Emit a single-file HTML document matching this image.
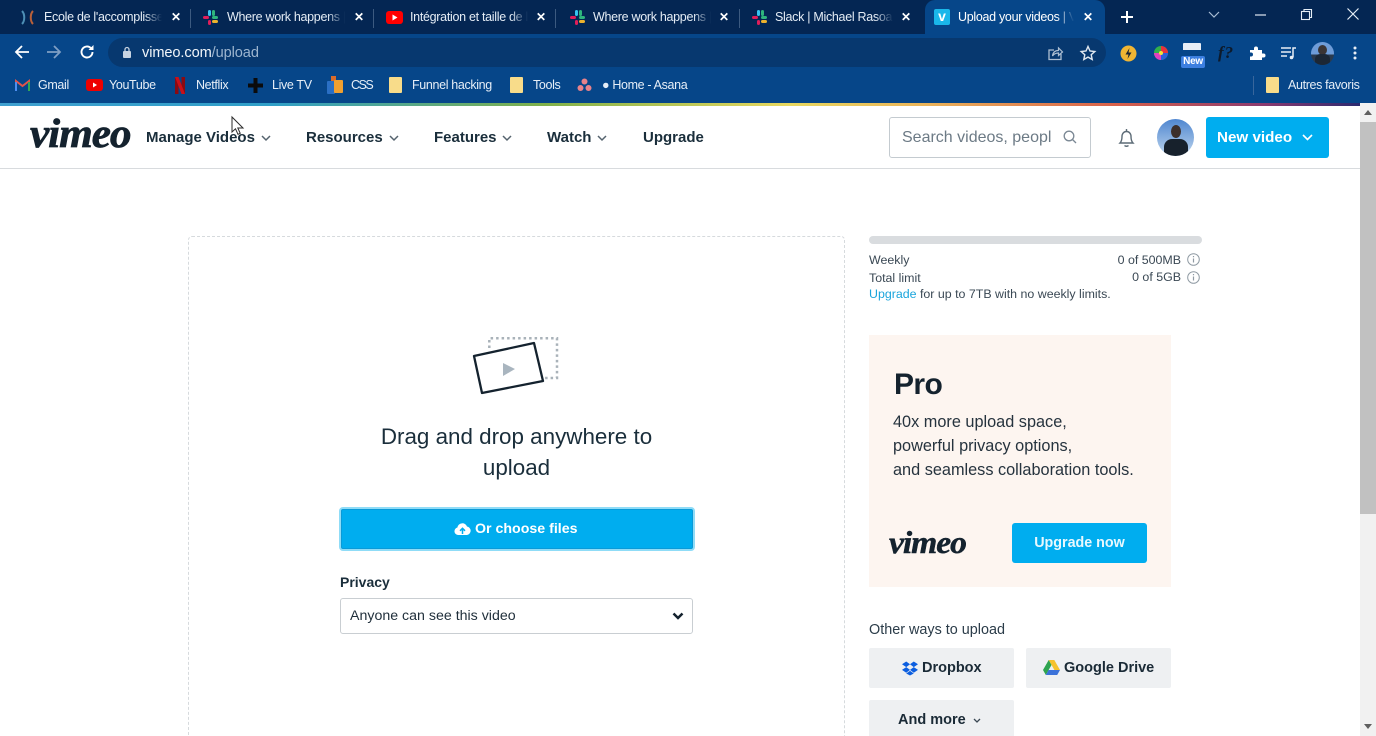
<!DOCTYPE html>
<html><head><meta charset="utf-8"><title>Upload your videos | Vimeo</title>
<style>
*{box-sizing:border-box}
html,body{margin:0;padding:0;width:1376px;height:736px;overflow:hidden;background:#fff;font-family:"Liberation Sans",sans-serif;color:#1a2e3b}
#w{position:relative;width:1376px;height:736px;overflow:hidden;background:#fff}
.a{position:absolute;white-space:nowrap}
.t{position:absolute;white-space:nowrap;line-height:20px;height:20px}
svg{position:absolute;overflow:visible}
.tab{color:#e4ecf5;font-size:12.5px;top:7px;overflow:hidden;letter-spacing:-.3px;-webkit-mask-image:linear-gradient(90deg,#000 85%,transparent 100%);mask-image:linear-gradient(90deg,#000 85%,transparent 100%)}
.x{color:#fff;font-size:12px;font-weight:bold;top:7px}
.sep{position:absolute;top:9px;width:1px;height:19px;background:#3c5a80}
.bm{color:#e6eef7;font-size:12.5px;top:75px;letter-spacing:-.35px}
.nav{font-size:15px;font-weight:bold;color:#1a2e3b;top:128px}
.fold{position:absolute;top:77px;width:13px;height:16px;background:#f8dc8a;border-radius:1px}
.logo{font-family:"Liberation Serif",serif;font-style:italic;font-weight:bold;color:#14222e;letter-spacing:-1px;-webkit-text-stroke:.7px #14222e}
</style></head><body><div id="w">

<!-- tab strip -->
<div class="a" style="left:0;top:0;width:1376px;height:34px;background:#042653"></div>
<div class="a" style="left:0;top:34px;width:1376px;height:34px;background:#064689"></div>
<div class="a" style="left:0;top:68px;width:1376px;height:35px;background:#064689"></div>
<div class="a" style="left:925px;top:0;width:180px;height:34px;background:#064689;border-radius:10px 10px 0 0"></div>

<!-- tab icons -->
<svg style="left:20px;top:10px" width="16" height="15" viewBox="0 0 16 15"><path d="M2 1c3 3 3 10 0 13" fill="none" stroke="#4d8fb5" stroke-width="2"/><path d="M13 1c-3 3-3 10 0 13" fill="none" stroke="#b8603a" stroke-width="2"/></svg>
<svg style="left:202px;top:9px" width="17" height="17" viewBox="0 0 17 17"><rect x="6" y="1" width="3" height="6" rx="1.5" fill="#36c5f0"/><rect x="1" y="7" width="6" height="3" rx="1.5" fill="#e01e5a"/><rect x="10" y="1" width="3" height="6" rx="1.5" fill="#2eb67d"/><rect x="10" y="7" width="6" height="3" rx="1.5" fill="#2eb67d"/><rect x="10" y="11" width="6" height="3" rx="1.5" fill="#ecb22e"/><rect x="6" y="11" width="3" height="5" rx="1.5" fill="#e01e5a"/></svg>
<svg style="left:386px;top:11px" width="17" height="13" viewBox="0 0 17 13"><rect width="17" height="13" rx="3" fill="#f00"/><path d="M6.500 3.500l5 3-5 3z" fill="#fff"/></svg>
<svg style="left:569px;top:9px" width="17" height="17" viewBox="0 0 17 17"><rect x="6" y="1" width="3" height="6" rx="1.5" fill="#36c5f0"/><rect x="1" y="7" width="6" height="3" rx="1.5" fill="#e01e5a"/><rect x="10" y="1" width="3" height="6" rx="1.5" fill="#2eb67d"/><rect x="10" y="7" width="6" height="3" rx="1.5" fill="#2eb67d"/><rect x="10" y="11" width="6" height="3" rx="1.5" fill="#ecb22e"/><rect x="6" y="11" width="3" height="5" rx="1.5" fill="#e01e5a"/></svg>
<svg style="left:751px;top:9px" width="17" height="17" viewBox="0 0 17 17"><rect x="6" y="1" width="3" height="6" rx="1.5" fill="#36c5f0"/><rect x="1" y="7" width="6" height="3" rx="1.5" fill="#e01e5a"/><rect x="10" y="1" width="3" height="6" rx="1.5" fill="#2eb67d"/><rect x="10" y="7" width="6" height="3" rx="1.5" fill="#2eb67d"/><rect x="10" y="11" width="6" height="3" rx="1.5" fill="#ecb22e"/><rect x="6" y="11" width="3" height="5" rx="1.5" fill="#e01e5a"/></svg>
<div class="a" style="left:934px;top:9px;width:16px;height:16px;background:#1ab7ea;border-radius:2px;color:#fff;font:bold 14px/15px 'Liberation Sans',sans-serif;text-align:center">v</div>

<!-- tab titles -->
<div class="t tab" style="left:44px;width:118px">Ecole de l'accomplissement</div>
<div class="t x" style="left:171px">✕</div>
<div class="sep" style="left:190px"></div>
<div class="t tab" style="left:227px;width:118px">Where work happens | Slack</div>
<div class="t x" style="left:354px">✕</div>
<div class="sep" style="left:373px"></div>
<div class="t tab" style="left:410px;width:118px">Intégration et taille de la vidéo</div>
<div class="t x" style="left:536px">✕</div>
<div class="sep" style="left:555px"></div>
<div class="t tab" style="left:593px;width:118px">Where work happens | Slack</div>
<div class="t x" style="left:719px">✕</div>
<div class="sep" style="left:739px"></div>
<div class="t tab" style="left:775px;width:118px">Slack | Michael Rasoanaivo</div>
<div class="t x" style="left:901px">✕</div>
<div class="t tab" style="left:958px;width:116px;color:#fff">Upload your videos | Vimeo</div>
<div class="t x" style="left:1083px">✕</div>

<!-- new tab & window controls -->
<svg style="left:1120px;top:10px" width="14" height="14" viewBox="0 0 14 14"><path d="M7 1v12M1 7h12" stroke="#fff" stroke-width="2"/></svg>
<svg style="left:1208px;top:11px" width="12" height="8" viewBox="0 0 12 8"><path d="M1 1l5 5 5-5" fill="none" stroke="#a9bdd4" stroke-width="1.2"/></svg>
<svg style="left:1255px;top:14px" width="11" height="2" viewBox="0 0 11 2"><path d="M0 1h11" stroke="#dfe8f2" stroke-width="1.2"/></svg>
<svg style="left:1301px;top:9px" width="11" height="11" viewBox="0 0 11 11"><rect x=".5" y="2.500" width="8" height="8" fill="none" stroke="#e6eef6" stroke-width="1.1"/><path d="M3 2.500V.5h7.500v8h-2" fill="none" stroke="#e6eef6" stroke-width="1.1"/></svg>
<svg style="left:1347px;top:8px" width="12" height="12" viewBox="0 0 12 12"><path d="M.5.5l11 11M11.500.5l-11 11" stroke="#e6eef6" stroke-width="1.2"/></svg>

<!-- toolbar -->
<svg style="left:14px;top:44px" width="16" height="16" viewBox="0 0 16 16"><path d="M15 8H2M8 2L2 8l6 6" fill="none" stroke="#fff" stroke-width="1.8"/></svg>
<svg style="left:46px;top:44px" width="16" height="16" viewBox="0 0 16 16"><path d="M1 8h13M8 2l6 6-6 6" fill="none" stroke="#7f9fc4" stroke-width="1.8"/></svg>
<svg style="left:79px;top:44px" width="16" height="16" viewBox="0 0 16 16"><path d="M13.500 8a5.500 5.500 0 1 1-1.600-3.900" fill="none" stroke="#fff" stroke-width="1.900"/><path d="M14.500 1v5h-5z" fill="#fff"/></svg>
<div class="a" style="left:108px;top:38px;width:998px;height:29px;background:#07386f;border-radius:15px"></div>
<svg style="left:122px;top:46px" width="10" height="13" viewBox="0 0 10 13"><rect x="1" y="5" width="8" height="7" rx="1" fill="#c8d4e2"/><path d="M3 5V3.500a2 2 0 0 1 4 0V5" fill="none" stroke="#c8d4e2" stroke-width="1.300"/></svg>
<div class="t" style="left:142px;top:43px;font-size:14.600px;color:#f2f6fa;letter-spacing:-.1px">vimeo.com<span style="color:#9db5cf">/upload</span></div>
<svg style="left:1047px;top:45px" width="16" height="16" viewBox="0 0 16 16"><path d="M14 9v5.500H2V5h5" fill="none" stroke="#aebfd2" stroke-width="1.300"/><path d="M5.500 11c.5-4 3-5.500 6-5.500V3l4 4-4 3.500V8c-2.500 0-4.500.8-6 3z" fill="none" stroke="#aebfd2" stroke-width="1.200"/></svg>
<svg style="left:1080px;top:45px" width="16" height="16" viewBox="0 0 16 16"><path d="M8 1.500l2 4.500 4.800.5-3.600 3.200 1 4.800L8 12.100 3.800 14.500l1-4.800L1.200 6.500 6 6z" fill="none" stroke="#e1e8f0" stroke-width="1.400"/></svg>
<svg style="left:1120px;top:45px" width="17" height="17" viewBox="0 0 17 17"><circle cx="8.500" cy="8.500" r="8" fill="#f0b533"/><path d="M9.500 3L5.500 9.500h3L7.500 14l4-6.500h-3z" fill="#1a2433"/></svg>
<svg style="left:1152px;top:44px" width="18" height="18" viewBox="0 0 18 18"><circle cx="9" cy="9" r="7" fill="#32b04a"/><path d="M9 9V2a7 7 0 0 1 7 7z" fill="#e8323c"/><path d="M9 9h7a7 7 0 0 1-7 7z" fill="#2a5fd8"/><path d="M9 9v7a7 7 0 0 1-7-7z" fill="#e23fc0"/><circle cx="9" cy="9" r="2" fill="#f4e23a"/></svg>
<div class="a" style="left:1183px;top:43px;width:18px;height:9px;background:#e8eef6;border-radius:1px 1px 0 0"></div>
<div class="a" style="left:1183px;top:50px;width:18px;height:3px;background:#064689"></div>
<div class="a" style="left:1181px;top:56px;width:24px;height:12px;background:#3c7fe0;border-radius:2px;color:#fff;font:bold 10px/12px 'Liberation Sans',sans-serif;text-align:center;letter-spacing:-.3px">New</div>
<div class="t" style="left:1218px;top:43px;font:italic bold 17px/20px 'Liberation Serif',serif;color:#0d1a2b;letter-spacing:1px">f?</div>
<svg style="left:1249px;top:45px" width="16" height="16" viewBox="0 0 16 16"><path d="M1 5h4V3.500a2 2 0 0 1 4 0V5h4v3.500h1.500a2 2 0 0 1 0 4H13V15H1v-3.500h1a2 2 0 0 0 0-4H1z" fill="#fff"/></svg>
<svg style="left:1280px;top:46px" width="17" height="14" viewBox="0 0 17 14"><path d="M1 2h10M1 6h10M1 10h6" stroke="#e8eef5" stroke-width="1.500"/><path d="M13 11.500V2h3" fill="none" stroke="#e8eef5" stroke-width="1.500"/><circle cx="11.500" cy="11.500" r="1.800" fill="#e8eef5"/></svg>
<div class="a" style="left:1311px;top:42px;width:23px;height:23px;border-radius:50%;background:linear-gradient(#6e9cd8 55%,#2a3a4e 55%);overflow:hidden"><div class="a" style="left:7px;top:3px;width:9px;height:10px;background:#3a3434;border-radius:50%"></div><div class="a" style="left:4px;top:12px;width:15px;height:14px;background:#1c2735;border-radius:5px"></div></div>
<svg style="left:1353px;top:46px" width="4" height="14" viewBox="0 0 4 14"><circle cx="2" cy="2" r="1.500" fill="#e8eef5"/><circle cx="2" cy="7" r="1.500" fill="#e8eef5"/><circle cx="2" cy="12" r="1.500" fill="#e8eef5"/></svg>

<!-- bookmarks -->
<svg style="left:15px;top:79px" width="15" height="12" viewBox="0 0 15 12"><path d="M1 12V2l6.500 5L14 2v10" fill="none" stroke="#e2544a" stroke-width="2"/><path d="M1 12V3" stroke="#4d8ef0" stroke-width="2"/><path d="M14 12V3" stroke="#35a853" stroke-width="2"/></svg>
<div class="t bm" style="left:38px">Gmail</div>
<svg style="left:86px;top:79px" width="17" height="12" viewBox="0 0 17 12"><rect width="17" height="12" rx="3" fill="#e00"/><path d="M7 3.500l4 2.500-4 2.500z" fill="#fff"/></svg>
<div class="t bm" style="left:109px">YouTube</div>
<svg style="left:174px;top:77px" width="12" height="17" viewBox="0 0 12 17"><rect x="1" width="3.500" height="17" fill="#8a0a12"/><rect x="7.500" width="3.500" height="17" fill="#8a0a12"/><path d="M1 0h3.500l6.500 17H7.500z" fill="#c8101a"/></svg>
<div class="t bm" style="left:196px">Netflix</div>
<svg style="left:248px;top:78px" width="15" height="15" viewBox="0 0 15 15"><path d="M5.500 0h4v5.500H15v4H9.500V15h-4V9.500H0v-4h5.500z" fill="#0b0b0b"/></svg>
<div class="t bm" style="left:272px">Live TV</div>
<svg style="left:327px;top:76px" width="16" height="18" viewBox="0 0 16 18"><rect x="4" y="0" width="5" height="6" fill="#d96b2a"/><rect x="0" y="5" width="8" height="13" rx="1" fill="#2a6fc4"/><rect x="7" y="4" width="9" height="13" rx="1" fill="#f0a030"/></svg>
<div class="t bm" style="left:351px;letter-spacing:-1.5px">CSS</div>
<div class="fold" style="left:389px"></div>
<div class="t bm" style="left:412px">Funnel hacking</div>
<div class="fold" style="left:510px"></div>
<div class="t bm" style="left:533px">Tools</div>
<svg style="left:577px;top:78px" width="15" height="14" viewBox="0 0 15 14"><circle cx="7.500" cy="3.500" r="3" fill="#e8828a"/><circle cx="3.500" cy="10" r="3" fill="#e8828a"/><circle cx="11.500" cy="10" r="3" fill="#e8828a"/></svg>
<div class="t bm" style="left:602px">● Home - Asana</div>
<div class="a" style="left:1253px;top:76px;width:1px;height:19px;background:#38669c"></div>
<div class="fold" style="left:1266px"></div>
<div class="t bm" style="left:1288px">Autres favoris</div>

<!-- rainbow line -->
<div class="a" style="left:0;top:103px;width:1360px;height:3px;background:linear-gradient(90deg,#3fa0d0 0%,#2f9fc8 20%,#7fb04a 40%,#e8d860 58%,#eab45a 68%,#d8604a 82%,#8a3a70 93%,#2a2a70 100%)"></div>

<!-- scrollbar -->
<div class="a" style="left:1360px;top:103px;width:16px;height:633px;background:#f1f1f1"></div>
<div class="a" style="left:1360px;top:122px;width:16px;height:392px;background:#c1c1c1"></div>
<svg style="left:1363px;top:110px" width="10" height="6" viewBox="0 0 10 6"><path d="M5 0l4 5H1z" fill="#5f5f5f"/></svg>
<svg style="left:1363px;top:724px" width="10" height="6" viewBox="0 0 10 6"><path d="M5 5L1 0h8z" fill="#5f5f5f"/></svg>

<!-- vimeo header -->
<div class="a" style="left:0;top:168px;width:1360px;height:1px;background:#d8dbde"></div>
<div class="a logo" style="left:30px;top:108px;font-size:41px;line-height:50px;transform-origin:0 50%;transform:scaleX(1.055)">vimeo</div>
<div class="t nav" style="left:146px">Manage Videos</div>
<svg style="left:261px;top:135px" width="10" height="7" viewBox="0 0 10 7"><path d="M1 1l4 4 4-4" fill="none" stroke="#55636e" stroke-width="1.500"/></svg>
<div class="t nav" style="left:306px">Resources</div>
<svg style="left:389px;top:135px" width="10" height="7" viewBox="0 0 10 7"><path d="M1 1l4 4 4-4" fill="none" stroke="#55636e" stroke-width="1.500"/></svg>
<div class="t nav" style="left:434px">Features</div>
<svg style="left:502px;top:135px" width="10" height="7" viewBox="0 0 10 7"><path d="M1 1l4 4 4-4" fill="none" stroke="#55636e" stroke-width="1.500"/></svg>
<div class="t nav" style="left:547px">Watch</div>
<svg style="left:597px;top:135px" width="10" height="7" viewBox="0 0 10 7"><path d="M1 1l4 4 4-4" fill="none" stroke="#55636e" stroke-width="1.500"/></svg>
<div class="t nav" style="left:643px">Upgrade</div>

<!-- cursor -->
<svg style="left:231px;top:116px" width="14" height="20" viewBox="0 0 14 20"><path d="M1 1v15l3.500-3.200 2.500 5.500 2.200-1-2.400-5.300H12z" fill="#fff" stroke="#2a2a2a" stroke-width="1"/></svg>

<!-- search -->
<div class="a" style="left:889px;top:117px;width:202px;height:41px;border:1px solid #c4cbd0;border-radius:3px;background:#fff"></div>
<div class="t" style="left:902px;top:127px;width:150px;overflow:hidden;font-size:16px;color:#6c7a85;line-height:21px">Search videos, people</div>
<svg style="left:1063px;top:130px" width="14" height="14" viewBox="0 0 14 14"><circle cx="6" cy="6" r="4.800" fill="none" stroke="#7b8894" stroke-width="1.300"/><path d="M9.500 9.500l3.500 3.500" stroke="#7b8894" stroke-width="1.300"/></svg>
<svg style="left:1118px;top:128px" width="17" height="20" viewBox="0 0 17 20"><path d="M2 15c1.500-1.500 2-3 2-6.500C4 5.500 6 3.500 8.500 3.500S13 5.500 13 8.500c0 3.500.5 5 2 6.500z" fill="none" stroke="#5c6b76" stroke-width="1.400"/><path d="M6.500 17.500c1 1 3 1 4 0M8.500 1v2" fill="none" stroke="#5c6b76" stroke-width="1.400"/></svg>
<div class="a" style="left:1157px;top:119px;width:37px;height:37px;border-radius:50%;background:linear-gradient(#4f86d0,#a8c6e8 80%);overflow:hidden"><div class="a" style="left:14px;top:6px;width:10px;height:13px;background:#3c2f2c;border-radius:50%"></div><div class="a" style="left:7px;top:20px;width:24px;height:20px;background:#17212c;border-radius:8px 8px 0 0"></div></div>
<div class="a" style="left:1206px;top:117px;width:123px;height:41px;background:#00adef;border-radius:3px"></div>
<div class="t" style="left:1217px;top:128px;font-size:15.200px;font-weight:bold;color:#fff">New video</div>
<svg style="left:1302px;top:134px" width="11" height="7" viewBox="0 0 11 7"><path d="M1 1l4.500 4.500L10 1" fill="none" stroke="#fff" stroke-width="1.600"/></svg>

<!-- dropzone -->
<div class="a" style="left:188px;top:236px;width:657px;height:520px;border:1px dashed #d6dadd;border-radius:4px"></div>
<svg style="left:470px;top:335px" width="92" height="62" viewBox="0 0 92 62">
<path d="M19.300 13V3.300H87V43H75" fill="none" stroke="#a9b2b9" stroke-width="2.500" stroke-dasharray="2.500 3"/>
<path d="M4 21L64 8l9 38L12 58z" fill="#fff" stroke="#14222e" stroke-width="2.300" stroke-linejoin="round"/>
<path d="M33 28l12 6-12 7z" fill="#a9b5bf"/>
</svg>
<div class="a" style="left:340px;top:421px;width:353px;text-align:center;font-size:22.400px;line-height:31px;color:#1a2e3b;white-space:normal">Drag and drop anywhere to<br>upload</div>
<div class="a" style="left:339px;top:507px;width:356px;height:44px;background:#00adef;border:2px solid #8fdcf7;border-radius:4px;box-shadow:inset 0 0 0 1px #0a9ad8"></div>
<svg style="left:454px;top:522px" width="17" height="13" viewBox="0 0 17 13"><path d="M4 13a3.800 3.800 0 0 1-.6-7.500A5 5 0 0 1 13 4.500 4.300 4.300 0 0 1 13 13z" fill="#fff"/><path d="M8.500 12V7M6 8.800l2.500-2.500L11 8.800" fill="none" stroke="#00adef" stroke-width="1.500"/></svg>
<div class="t" style="left:475px;top:519px;font-size:14.200px;font-weight:bold;color:#fff">Or choose files</div>
<div class="t" style="left:340px;top:572px;font-size:14px;font-weight:bold;color:#1a2e3b">Privacy</div>
<div class="a" style="left:340px;top:598px;width:353px;height:36px;border:1px solid #c9ced2;border-radius:3px;background:#fff"></div>
<div class="t" style="left:350px;top:606px;font-size:14.200px;color:#1f2e3a">Anyone can see this video</div>
<svg style="left:672px;top:612px" width="12" height="9" viewBox="0 0 12 9"><path d="M1.500 1.500L6 6l4.500-4.500" fill="none" stroke="#14222e" stroke-width="2.500"/></svg>

<!-- sidebar stats -->
<div class="a" style="left:869px;top:236px;width:333px;height:8px;background:#d9dcdf;border-radius:4px"></div>
<div class="t" style="left:869px;top:250px;font-size:12.400px;color:#3a4854">Weekly</div>
<div class="t" style="left:1081px;top:250px;width:100px;text-align:right;font-size:12.400px;color:#3a4854">0 of 500MB</div>
<svg style="left:1187px;top:253px" width="13" height="13" viewBox="0 0 13 13"><circle cx="6.500" cy="6.500" r="5.800" fill="none" stroke="#8f9aa3"/><path d="M6.500 5.500v4M6.500 3v1.200" stroke="#8f9aa3" stroke-width="1.200"/></svg>
<div class="t" style="left:869px;top:268px;font-size:12.400px;color:#3a4854">Total limit</div>
<div class="t" style="left:1081px;top:267px;width:100px;text-align:right;font-size:12.400px;color:#3a4854">0 of 5GB</div>
<svg style="left:1187px;top:271px" width="13" height="13" viewBox="0 0 13 13"><circle cx="6.500" cy="6.500" r="5.800" fill="none" stroke="#8f9aa3"/><path d="M6.500 5.500v4M6.500 3v1.200" stroke="#8f9aa3" stroke-width="1.200"/></svg>
<div class="t" style="left:869px;top:284px;font-size:12.400px;color:#3a4854"><span style="color:#1ba5dc">Upgrade</span> for up to 7TB with no weekly limits.</div>

<!-- pro card -->
<div class="a" style="left:869px;top:335px;width:302px;height:252px;background:#fdf5f0"></div>
<div class="a" style="left:894px;top:367px;font-size:30px;line-height:36px;font-weight:bold;color:#14222e;letter-spacing:-.6px">Pro</div>
<div class="a" style="left:893px;top:410px;font-size:16.300px;line-height:24px;color:#26333e">40x more upload space,<br>powerful privacy options,<br>and seamless collaboration tools.</div>
<div class="a logo" style="left:889px;top:525px;font-size:32px;line-height:34px;transform-origin:0 50%;transform:scaleX(1.05);-webkit-text-stroke:.5px #14222e">vimeo</div>
<div class="a" style="left:1012px;top:523px;width:135px;height:40px;background:#00adef;border-radius:3px;color:#e8f8fe;font-size:14.300px;font-weight:bold;line-height:41px;text-align:center">Upgrade now</div>

<!-- other ways -->
<div class="t" style="left:869px;top:620px;font-size:14.400px;color:#2b3c49">Other ways to upload</div>
<div class="a" style="left:869px;top:648px;width:145px;height:40px;background:#eef0f2;border-radius:2px"></div>
<svg style="left:902px;top:661px" width="16" height="15" viewBox="0 0 17 15"><path d="M4.500 0L0 3l4.500 3L8.500 3zM12.500 0l-4 3 4 3L17 3zM4.500 6L0 9l4.500 3 4-3zM12.500 6l-4 3 4 3L17 9zM4.500 12.800l4 2.200 4-2.200-4-2.800z" fill="#0d5fe0"/></svg>
<div class="t" style="left:922px;top:658px;font-size:14.500px;font-weight:bold;color:#1a2a36">Dropbox</div>
<div class="a" style="left:1026px;top:648px;width:145px;height:40px;background:#eef0f2;border-radius:2px"></div>
<svg style="left:1043px;top:660px" width="17" height="15" viewBox="0 0 17 15"><path d="M5.700 0h5.600l5.700 10h-5.600z" fill="#f5c22c"/><path d="M5.700 0L0 10l2.800 5 5.700-10z" fill="#2ea44f"/><path d="M2.800 15h11.400l2.800-5H5.600z" fill="#3b72d9"/></svg>
<div class="t" style="left:1064px;top:658px;font-size:14.500px;font-weight:bold;color:#1a2a36">Google Drive</div>
<div class="a" style="left:869px;top:700px;width:145px;height:40px;background:#eef0f2;border-radius:2px"></div>
<div class="t" style="left:898px;top:710px;font-size:14.500px;font-weight:bold;color:#1a2a36">And more</div>
<svg style="left:973px;top:718px" width="8" height="6" viewBox="0 0 8 6"><path d="M1 1l3 3 3-3" fill="none" stroke="#3a4854" stroke-width="1.300"/></svg>

</div></body></html>
